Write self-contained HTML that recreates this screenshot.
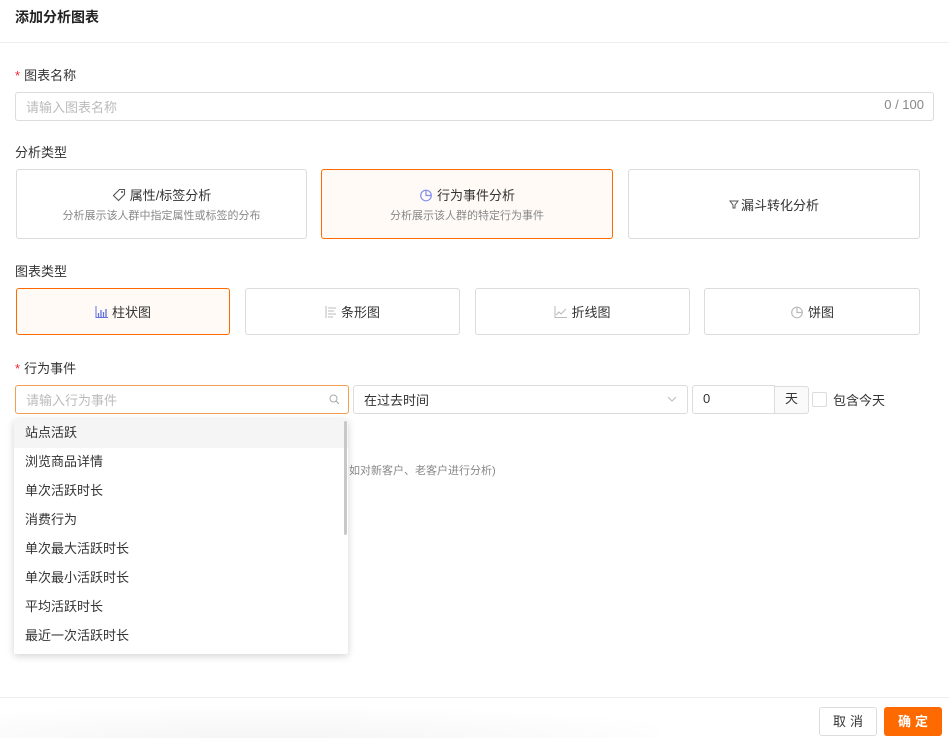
<!DOCTYPE html><html><head><meta charset="utf-8"><style>
*{box-sizing:border-box;margin:0;padding:0}
body{width:949px;height:738px;position:relative;background:#fff;font-family:"Liberation Sans","Noto Sans CJK SC",sans-serif;color:#333;font-size:13px;overflow:hidden}
.a{position:absolute}
.box{position:absolute;border:1px solid #dcdcdc;border-radius:3px;background:#fff}
.sel{border-color:#ff6a00;background:#fffaf6}
.lbl{position:absolute;font-size:13px;color:#333}
.req{color:#f5222d;margin-right:4px}
.c{display:flex;flex-direction:column;align-items:center;justify-content:center}
.t{font-size:13px;color:#333;display:flex;align-items:center;gap:4px}
.s{font-size:11px;color:#888;margin-top:3px}
.item{height:29px;line-height:28px;padding-left:11px;font-size:13px;color:#333}
</style></head><body>
<div class="a" style="left:15px;top:7px;font-size:14px;font-weight:bold;color:#222">添加分析图表</div>
<div class="a" style="left:0;top:42px;width:949px;height:1px;background:#eee"></div>

<div class="lbl" style="left:15px;top:65px"><span class="req">*</span>图表名称</div>
<div class="box" style="left:15px;top:92px;width:919px;height:29px"><span class="a" style="left:10px;top:4px;color:#bbb">请输入图表名称</span><span class="a" style="right:9px;top:4px;color:#888">0 / 100</span></div>

<div class="lbl" style="left:15px;top:142px">分析类型</div>
<div class="box c" style="left:16px;top:169px;width:291px;height:70px"><div class="t"><svg width="14" height="14" viewBox="0 0 14 14"><path d="M7.5 1.5h5v5l-6 6-5-5z" fill="none" stroke="#555" stroke-width="1.1"/><circle cx="10" cy="4" r="1" fill="#555"/></svg>属性/标签分析</div><div class="s">分析展示该人群中指定属性或标签的分布</div></div>
<div class="box c sel" style="left:321px;top:169px;width:292px;height:70px"><div class="t"><svg width="14" height="14" viewBox="0 0 14 14"><circle cx="7" cy="7.5" r="5.3" fill="none" stroke="#8090ee" stroke-width="1.2"/><path d="M7 2.2V7.5h5.3" fill="none" stroke="#8090ee" stroke-width="1.2"/></svg>行为事件分析</div><div class="s">分析展示该人群的特定行为事件</div></div>
<div class="box c" style="left:628px;top:169px;width:292px;height:70px"><div class="t" style="gap:2px"><svg width="10" height="10" viewBox="0 0 10 10"><path d="M1 2h8L6 6v3H4V6z" fill="none" stroke="#555"/></svg>漏斗转化分析</div></div>

<div class="lbl" style="left:15px;top:261px">图表类型</div>
<div class="box c sel" style="left:16px;top:288px;width:214px;height:47px"><div class="t"><svg width="13" height="12" viewBox="0 0 13 12"><path d="M1 0v11.5h12" stroke="#6070e0" fill="none"/><path d="M3.5 7v4M6 4v7M8.5 6v5M11 3v8" stroke="#6070e0" stroke-width="1.3"/></svg> 柱状图</div></div>
<div class="box c" style="left:245px;top:288px;width:215px;height:47px"><div class="t"><svg width="12" height="12" viewBox="0 0 12 12"><path d="M1 0v12M3 2h8M3 5h6M3 8h8M3 11h5" stroke="#bbb"/></svg> 条形图</div></div>
<div class="box c" style="left:475px;top:288px;width:215px;height:47px"><div class="t"><svg width="13" height="12" viewBox="0 0 13 12"><path d="M1 0v11.5h12" stroke="#bbb" fill="none"/><path d="M2 9l3-3 2 2 5-5" stroke="#bbb" fill="none"/></svg> 折线图</div></div>
<div class="box c" style="left:704px;top:288px;width:216px;height:47px"><div class="t"><svg width="14" height="14" viewBox="0 0 14 14"><circle cx="7" cy="7.5" r="5.3" fill="none" stroke="#bbb" stroke-width="1.2"/><path d="M7 2.2V7.5h5.3" fill="none" stroke="#bbb" stroke-width="1.2"/></svg> 饼图</div></div>

<div class="lbl" style="left:15px;top:358px"><span class="req">*</span>行为事件</div>
<div class="box" style="left:15px;top:385px;width:334px;height:29px;border-color:#f0a050"><span class="a" style="left:10px;top:4px;color:#bbb">请输入行为事件</span><svg class="a" style="right:8px;top:8px" width="11" height="11" viewBox="0 0 11 11"><circle cx="4.5" cy="4.5" r="3.5" fill="none" stroke="#aaa"/><path d="M7 7l3 3" stroke="#aaa"/></svg></div>
<div class="box" style="left:353px;top:385px;width:335px;height:29px"><span class="a" style="left:10px;top:4px;color:#333">在过去时间</span><svg class="a" style="right:10px;top:10px" width="10" height="7" viewBox="0 0 10 7"><path d="M1 1l4 4 4-4" fill="none" stroke="#bbb"/></svg></div>
<div class="box" style="left:692px;top:385px;width:83px;height:29px;border-radius:3px 0 0 3px"><span class="a" style="left:10px;top:5px">0</span></div>
<div class="box" style="left:774px;top:386px;width:35px;height:28px;background:#fafafa;border-radius:0 3px 3px 0;text-align:center;line-height:24px">天</div>
<div class="box" style="left:812px;top:392px;width:15px;height:15px;border-radius:2px"></div>
<div class="lbl" style="left:833px;top:390px">包含今天</div>

<div class="a" style="left:349px;top:462px;font-size:11px;color:#888">如对新客户、老客户进行分析)</div>

<div class="a" style="left:14px;top:419px;width:334px;height:235px;background:#fff;box-shadow:0 2px 8px rgba(0,0,0,.18);border-radius:2px">
<div class="item" style="background:#f5f5f5">站点活跃</div><div class="item">浏览商品详情</div><div class="item">单次活跃时长</div><div class="item">消费行为</div><div class="item">单次最大活跃时长</div><div class="item">单次最小活跃时长</div><div class="item">平均活跃时长</div><div class="item">最近一次活跃时长</div>
<div class="a" style="left:330px;top:2px;width:3px;height:114px;background:#c8c8c8;border-radius:2px"></div>
</div>

<div class="a" style="left:0;top:697px;width:949px;height:1px;background:#eee"></div>
<div class="a" style="left:0;top:705px;width:660px;height:33px;background:radial-gradient(ellipse 70% 100% at 40% 100%,rgba(0,0,0,.04),rgba(0,0,0,0))"></div>
<div class="box" style="left:819px;top:707px;width:58px;height:29px;text-align:center;line-height:27px;letter-spacing:4px;padding-left:4px">取消</div>
<div class="a" style="left:884px;top:707px;width:58px;height:29px;background:#ff6a00;border-radius:3px;color:#fff;text-align:center;line-height:29px;letter-spacing:4px;padding-left:4px;font-weight:bold">确定</div>
</body></html>
